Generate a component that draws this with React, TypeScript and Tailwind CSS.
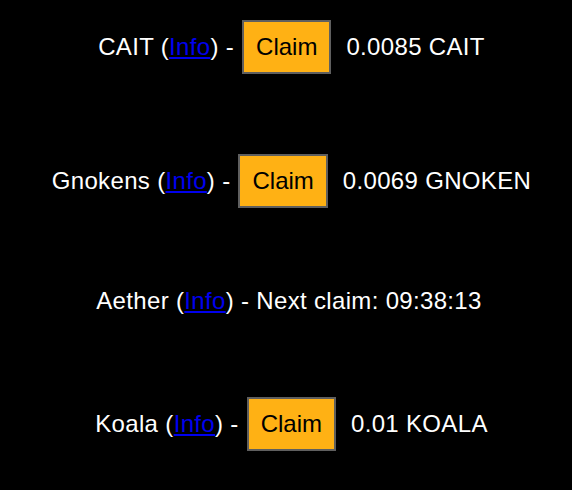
import React from "react";

type Faucet = {
  name: string;
  amount?: string;
  next?: string;
};

const faucets: Faucet[] = [
  { name: "CAIT", amount: "0.0085 CAIT" },
  { name: "Gnokens", amount: "0.0069 GNOKEN" },
  { name: "Aether", next: "09:38:13" },
  { name: "Koala", amount: "0.01 KOALA" },
];

const FaucetRow = ({ faucet }: { faucet: Faucet }) => {
  return (
    <div
      className={
        faucet.amount
          ? "flex items-center justify-center whitespace-pre pl-[5px]"
          : "flex items-center justify-center whitespace-pre"
      }
    >
      <span>
        {faucet.name} (
        <a href="#" className="text-[#0000ee] underline">
          Info
        </a>
        ) -{" "}
      </span>
      {faucet.amount ? (
        <>
          <button className="ml-[1px] mr-[15px] bg-[#ffb114] border-2 border-[#5f5f5f] text-black px-[12px] py-[11px] leading-[28px] text-[24px] tracking-normal">
            Claim
          </button>
          <span>{faucet.amount}</span>
        </>
      ) : (
        <span>Next claim: {faucet.next}</span>
      )}
    </div>
  );
};

export default function App() {
  return (
    <div
      className="w-[572px] h-[490px] bg-black text-white text-[24px] leading-[28px] tracking-[0.33px] pt-[20px] pl-[6px] flex flex-col"
      style={{ fontFamily: '"Liberation Sans", Arial, sans-serif' }}
    >
      <FaucetRow faucet={faucets[0]} />
      <div className="mt-[80px]">
        <FaucetRow faucet={faucets[1]} />
      </div>
      <div className="mt-[79px]">
        <FaucetRow faucet={faucets[2]} />
      </div>
      <div className="mt-[82px]">
        <FaucetRow faucet={faucets[3]} />
      </div>
    </div>
  );
}
